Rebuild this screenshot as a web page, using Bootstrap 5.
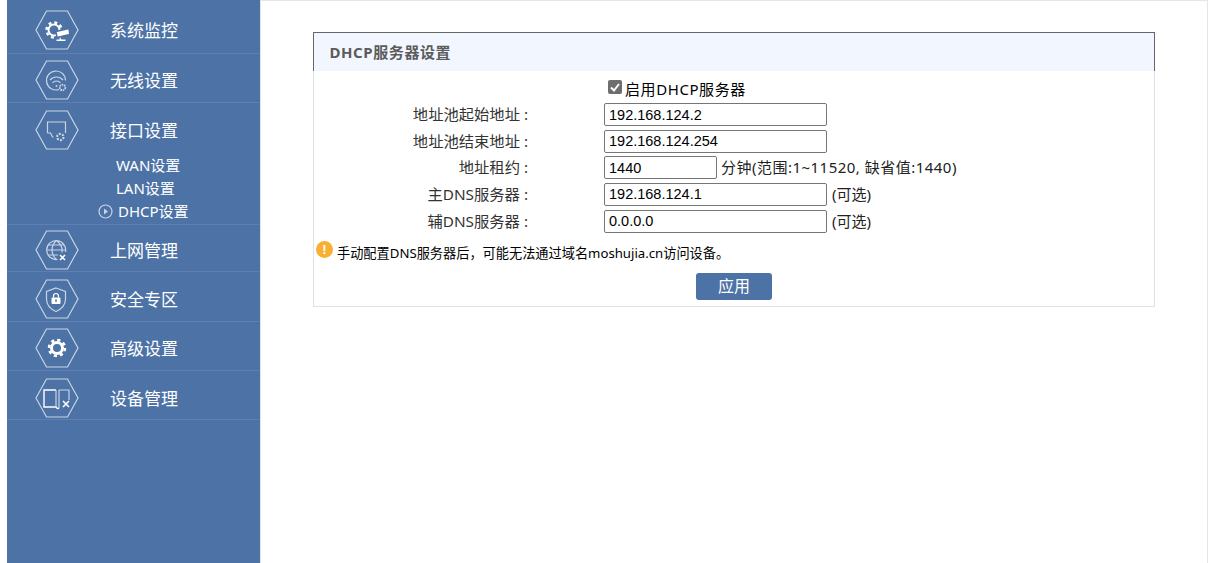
<!DOCTYPE html>
<html lang="zh-CN">
<head>
<meta charset="utf-8">
<title>DHCP服务器设置</title>
<link rel="stylesheet" href="https://cdn.jsdelivr.net/npm/bootstrap@5.3.0/dist/css/bootstrap.min.css">
<style>
html,body{height:563px;overflow:hidden;background:#fff}
body{font-family:"Noto Sans","Noto Sans CJK SC",sans-serif;font-size:14px;color:#000}
.shell{height:563px;padding-left:7px}
.rail{width:253px;background:#4c72a6;flex:none}
.rail-entry{border-bottom:1px solid #5f7fb4;color:#fff}
.rail-entry:nth-child(1){height:54px;padding-top:10px}
.rail-entry:nth-child(2){height:49px;padding-top:6px}
.rail-entry:nth-child(3){height:122px;padding-top:7px}
.rail-entry:nth-child(4){height:47px;padding-top:5px}
.rail-entry:nth-child(5){height:50px;padding-top:7px}
.rail-entry:nth-child(6){height:49px;padding-top:6px}
.rail-entry:nth-child(7){height:49px;padding-top:7px}
.rail-head{padding-left:28px}
.hex-ico{width:44px;height:40px;flex:none;display:block}
.rail-name{margin-left:31px;font-size:17px;line-height:41px;width:70px;white-space:nowrap}
.rail-sub{margin:2.5px 0 0;padding:0;list-style:none;font-size:15px}
.rail-sub li{height:23px;line-height:23px;padding-left:109px;white-space:nowrap}
.rail-sub li.on{padding-left:91px;display:flex;align-items:center;gap:5px}
.page-area{border-top:1px solid #e6e6e6;border-right:1px solid #e6e6e6;border-left:1px solid #dfe3ee;padding:31px 0 0 52px}
.panel-box{border:1px solid #dde1ea;height:275px;width:842px}
.panel-title{margin:-1px -1px 0;height:39px;background:#f2f6fe;border:1px solid #666;border-bottom:0;padding-left:15.500px;font-size:15px;letter-spacing:.58px;font-weight:700;color:#5b5b5b;line-height:38px}
.check-row{height:32px;padding-left:294px;font-size:15px;letter-spacing:.58px;line-height:38px}
.check-box{width:14px;height:14px;margin-right:3px;border-radius:2px;background:#6e6e6e;color:#fff}
.check-label{padding-top:3px}
.field-row{height:26.67px}
.field-name{width:214px;text-align:right;font-size:15.300px;color:#333;white-space:nowrap;line-height:22px}
.field-input{margin-left:76px;width:223px;height:23px;border:1px solid #767676;border-radius:2px;padding:0 4px;font:14.5px/20px "Liberation Sans",sans-serif;color:#000;background:#fff}
.field-input.short-in{width:113px}
.field-note{margin-left:5px;font-size:15px;white-space:nowrap;line-height:22px;color:#222}
.field-note.wide-note{margin-left:4px;letter-spacing:.48px}
.warn-row{height:37px;padding:5px 0 0 2px;font-size:13.200px;color:#000}
.warn-dot{width:17px;height:17px;border-radius:50%;background:#f8b032;color:#fff;font:700 13px/17px "Liberation Sans",sans-serif;text-align:center;margin-right:4px;flex:none}
.warn-text{margin-top:3px;white-space:nowrap}
.apply-btn{width:76px;height:27px;padding:0;border:0;border-radius:3px;background:#4c72a6;color:#fff;font-size:16px;line-height:27px;margin-left:382px}
.ico-l{stroke:#c9d4e4;fill:none;stroke-width:1.2}
.ico-w{stroke:#fff;fill:none;stroke-width:1.4}
.ico-f{fill:#fff;stroke:none}
</style>
</head>
<body>
<div class="d-flex shell">
<nav class="rail">
  <div class="rail-entry"><div class="d-flex rail-head">
    <svg class="hex-ico" viewBox="0 0 44 40"><polygon class="ico-l" points="1,20 11.5,1 32.5,1 43,20 32.5,39 11.5,39"/>
      <circle cx="19" cy="20" r="5.500" fill="none" stroke="#fff" stroke-width="2"/><circle cx="19" cy="20" r="7.500" fill="none" stroke="#fff" stroke-width="2.500" stroke-dasharray="3 2.900"/>
      <path d="M21 21.500l13-3 .8 6-12.800 3z" fill="#fff" stroke="#4c72a6" stroke-width="1.500"/><path d="M25 27l-.5 2.500h-3v1.500h9v-1.500h-4" fill="#fff"/></svg>
    <span class="rail-name">系统监控</span></div></div>
  <div class="rail-entry"><div class="d-flex rail-head">
    <svg class="hex-ico" viewBox="0 0 44 40"><polygon class="ico-l" points="1,20 11.5,1 32.5,1 43,20 32.5,39 11.5,39"/>
      <path class="ico-l" d="M24 29.500a9.500 9.500 0 1 1 6.500-9M15 20a8.500 8.500 0 0 1 13 0M17.500 23a5 5 0 0 1 8 0"/><circle cx="21.500" cy="26" r="1" fill="#c9d4e4"/><circle cx="27.500" cy="27.500" r="2.800" fill="none" stroke="#c9d4e4" stroke-width="1.800" stroke-dasharray="1.600 .8"/></svg>
    <span class="rail-name">无线设置</span></div></div>
  <div class="rail-entry"><div class="d-flex rail-head">
    <svg class="hex-ico" viewBox="0 0 44 40"><polygon class="ico-l" points="1,20 11.5,1 32.5,1 43,20 32.5,39 11.5,39"/>
      <path class="ico-l" d="M12.500 23V12h18v11M12.500 23h3l2 4h1"/><circle cx="25.300" cy="27" r="3.200" fill="none" stroke="#c9d4e4" stroke-width="2.200" stroke-dasharray="2 1.300"/></svg>
    <span class="rail-name">接口设置</span></div>
    <ul class="rail-sub"><li>WAN设置</li><li>LAN设置</li><li class="on"><svg width="15" height="15" viewBox="0 0 15 15"><circle cx="7.5" cy="7.5" r="6.5" fill="none" stroke="#c9d4e4" stroke-width="1.2"/><path d="M6 4.5l4 3-4 3z" fill="#c9d4e4"/></svg><span>DHCP设置</span></li></ul></div>
  <div class="rail-entry"><div class="d-flex rail-head">
    <svg class="hex-ico" viewBox="0 0 44 40"><polygon class="ico-l" points="1,20 11.5,1 32.5,1 43,20 32.5,39 11.5,39"/>
      <path class="ico-l" d="M30.500 22a9.500 9.500 0 1 0-8 7.500M12.500 20h18.500M14 15h15.500M14 25h9M21.500 10.500c-6 5-6 14 0 19M21.500 10.500c5 4 6 9 5.500 12"/><path d="M25 25l5 5M30 25l-5 5" stroke="#fff" stroke-width="1.600"/></svg>
    <span class="rail-name">上网管理</span></div></div>
  <div class="rail-entry"><div class="d-flex rail-head">
    <svg class="hex-ico" viewBox="0 0 44 40"><polygon class="ico-l" points="1,20 11.5,1 32.5,1 43,20 32.5,39 11.5,39"/>
      <path class="ico-l" d="M21 9l9.500 3.500v7.500c0 5.500-4 10-9.500 12.500-5.500-2.500-9.500-7-9.500-12.500v-7.500z"/><rect class="ico-f" x="16.500" y="18.500" width="9" height="6.500" rx="1"/><path d="M18.500 18.500v-1.500a2.500 2.500 0 0 1 5 0v1.500" fill="none" stroke="#fff" stroke-width="1.200"/><rect x="20.300" y="20.300" width="1.400" height="2.800" fill="#4c72a6"/></svg>
    <span class="rail-name">安全专区</span></div></div>
  <div class="rail-entry"><div class="d-flex rail-head">
    <svg class="hex-ico" viewBox="0 0 44 40"><polygon class="ico-l" points="1,20 11.5,1 32.5,1 43,20 32.5,39 11.5,39"/>
      <circle cx="22" cy="20" r="5.500" fill="none" stroke="#fff" stroke-width="3"/><circle cx="22" cy="20" r="8" fill="none" stroke="#fff" stroke-width="2.500" stroke-dasharray="3.200 3.080"/></svg>
    <span class="rail-name">高级设置</span></div></div>
  <div class="rail-entry"><div class="d-flex rail-head">
    <svg class="hex-ico" viewBox="0 0 44 40"><polygon class="ico-l" points="1,20 11.5,1 32.5,1 43,20 32.5,39 11.5,39"/>
      <path class="ico-w" d="M21 12H9v17h12c1 1.500 2 2 3 1"/><path class="ico-l" d="M21 12v17M24 12v18M24 12h10v10"/><path d="M28 23l6 6M34 23l-6 6" stroke="#fff" stroke-width="1.600"/></svg>
    <span class="rail-name">设备管理</span></div></div>
</nav>
<main class="flex-grow-1 page-area">
  <section class="panel-box">
    <div class="panel-title">DHCP服务器设置</div>
    <div class="d-flex align-items-center check-row"><svg class="check-box" viewBox="0 0 14 14"><path d="M3 7.500l3 3 5-6.500" fill="none" stroke="#fff" stroke-width="2"/></svg><span class="check-label">启用DHCP服务器</span></div>
    <div class="d-flex field-row"><span class="field-name">地址池起始地址 :</span><input class="field-input" value="192.168.124.2"></div>
    <div class="d-flex field-row"><span class="field-name">地址池结束地址 :</span><input class="field-input" value="192.168.124.254"></div>
    <div class="d-flex field-row"><span class="field-name">地址租约 :</span><input class="field-input short-in" value="1440"><span class="field-note wide-note">分钟(范围:1~11520, 缺省值:1440)</span></div>
    <div class="d-flex field-row"><span class="field-name">主DNS服务器 :</span><input class="field-input" value="192.168.124.1"><span class="field-note">(可选)</span></div>
    <div class="d-flex field-row"><span class="field-name">辅DNS服务器 :</span><input class="field-input" value="0.0.0.0"><span class="field-note">(可选)</span></div>
    <div class="d-flex warn-row"><span class="warn-dot">!</span><span class="warn-text">手动配置DNS服务器后，可能无法通过域名moshujia.cn访问设备。</span></div>
    <button type="button" class="btn apply-btn">应用</button>
  </section>
</main>
</div>
<script src="https://cdn.jsdelivr.net/npm/bootstrap@5.3.0/dist/js/bootstrap.bundle.min.js"></script>
</body>
</html>
